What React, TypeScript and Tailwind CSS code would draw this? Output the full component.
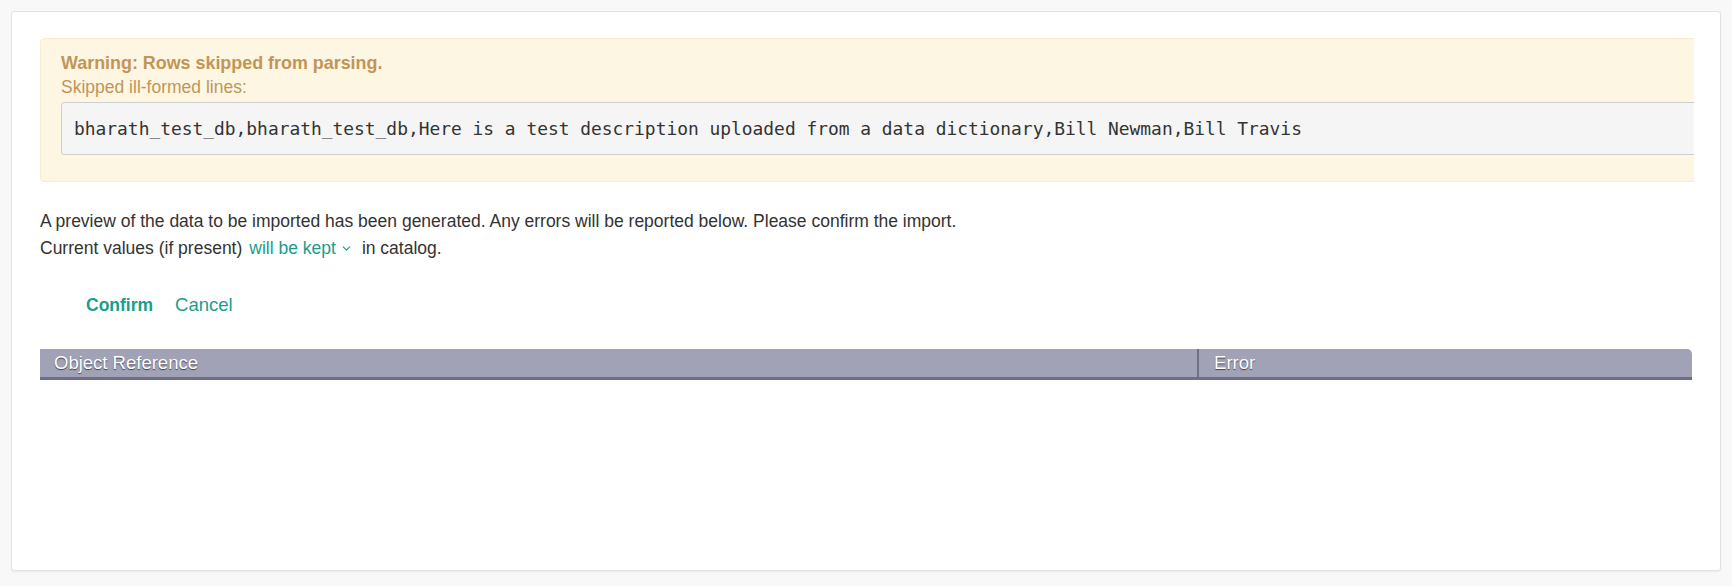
import { ChevronDown } from "lucide-react";

const skipped =
  "bharath_test_db,bharath_test_db,Here is a test description uploaded from a data dictionary,Bill Newman,Bill Travis";

export default function App() {
  return (
    <div className="min-h-[586px] bg-[#f8f8f8] p-[11px] font-['Liberation_Sans',Arial,sans-serif] text-[17.5px] text-[#333]">
      <div className="h-[560px] rounded-[3px] border border-[#e2e2e2] bg-white shadow-[0_1px_2px_rgba(0,0,0,0.06)]">
        <div className="ml-[28px] mr-[26px] overflow-hidden pt-[26px]">
          {/* warning box, wider than the column so its right side is cut */}
          <div className="w-[calc(100%+20px)] rounded-[4px] border border-[#f9ecd0] bg-[#fdf6e3] pb-[26px] pl-[20px] pt-[12px] text-[#c29557]">
            <div className="text-[17.9px] font-bold leading-[24px]">Warning: Rows skipped from parsing.</div>
            <div className="leading-[24px]">Skipped ill-formed lines:</div>
            <pre className="mt-[3px] rounded-[3px] border border-[#cfcfcf] bg-[#f5f5f5] px-[12px] py-[13px] font-['DejaVu_Sans_Mono',monospace] text-[17.9px] leading-[25px] text-[#333]">
              {skipped}
            </pre>
          </div>

          <div className="mt-[26px] leading-[27px]">
            <div>
              A preview of the data to be imported has been generated. Any errors will be reported below. Please
              confirm the import.
            </div>
            <div className="flex h-[27px] items-center">
              <span>Current values (if present)</span>
              <button className="ml-[7px] flex items-center text-[#1a9e8b]">
                will be kept
                <ChevronDown className="ml-[4px] h-[13px] w-[13px]" strokeWidth={2.2} />
              </button>
              <span className="ml-[9px]">in catalog.</span>
            </div>
          </div>

          <div className="ml-[46px] mt-[31px] flex gap-[22px] leading-[24px]">
            <button className="font-bold text-[#1a9e8b]">Confirm</button>
            <button className="text-[18.5px] text-[#1a9e8b]">Cancel</button>
          </div>

          <table className="mt-[32px] w-[calc(100%-2px)] border-collapse">
            <thead>
              <tr className="bg-[#a2a2b6] text-[18.5px] text-white [text-shadow:0_1px_1px_rgba(40,40,60,0.8)]">
                <th className="h-[29px] w-[70.1%] border-b-[3px] border-r-2 border-[#6e6e86] px-[14px] text-left font-normal">
                  Object Reference
                </th>
                <th className="h-[29px] rounded-tr-[5px] border-b-[3px] border-[#6e6e86] px-[15px] text-left font-normal">
                  Error
                </th>
              </tr>
            </thead>
            <tbody></tbody>
          </table>
        </div>
      </div>
    </div>
  );
}
